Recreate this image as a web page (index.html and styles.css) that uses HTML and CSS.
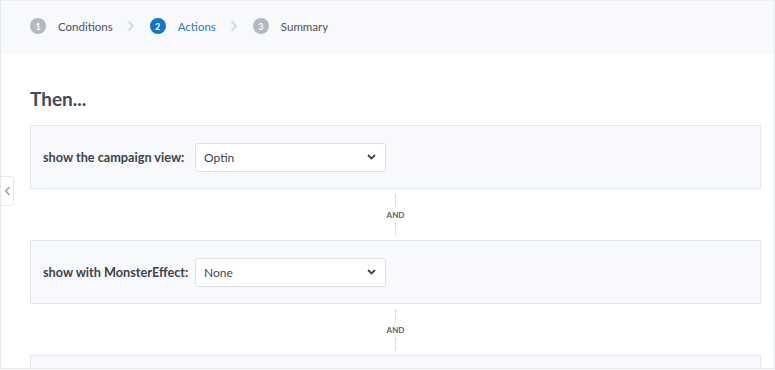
FILE: index.html
```html
<!DOCTYPE html>
<html lang="en">
<head>
  <meta charset="UTF-8">
  <title>Campaign Rules - Actions</title>
  <link rel="stylesheet" href="styles.css">
</head>
<body>
  <div class="frame">
    <div class="steps">
      <div class="step">
        <span class="num">1</span>
        <span class="name">Conditions</span>
      </div>
      <span class="sep">
        <svg width="8" height="12" viewBox="0 0 8 12"><path d="M1.5 1.5l4.5 4.5-4.5 4.5" fill="none" stroke="#d5d9e0" stroke-width="2"/></svg>
      </span>
      <div class="step current">
        <span class="num">2</span>
        <span class="name">Actions</span>
      </div>
      <span class="sep">
        <svg width="8" height="12" viewBox="0 0 8 12"><path d="M1.5 1.5l4.5 4.5-4.5 4.5" fill="none" stroke="#d5d9e0" stroke-width="2"/></svg>
      </span>
      <div class="step">
        <span class="num">3</span>
        <span class="name">Summary</span>
      </div>
    </div>

    <div class="content">
      <button class="side-tab">
        <svg width="7" height="10" viewBox="0 0 7 10"><path d="M5.5 1L1.8 5l3.7 4" fill="none" stroke="#9aa3b2" stroke-width="1.6"/></svg>
      </button>

      <h2 class="title">Then...</h2>

      <div class="rule">
        <label class="rule-label">show the campaign view:</label>
        <div class="select">
          <span>Optin</span>
          <svg width="9" height="6" viewBox="0 0 9 6"><path d="M1 1l3.5 3.5L8 1" fill="none" stroke="#3d434d" stroke-width="1.8"/></svg>
        </div>
      </div>

      <div class="joiner"><span class="dots"></span><span class="and">AND</span><span class="dots"></span></div>

      <div class="rule">
        <label class="rule-label">show with MonsterEffect:</label>
        <div class="select">
          <span>None</span>
          <svg width="9" height="6" viewBox="0 0 9 6"><path d="M1 1l3.5 3.5L8 1" fill="none" stroke="#3d434d" stroke-width="1.8"/></svg>
        </div>
      </div>

      <div class="joiner"><span class="dots"></span><span class="and">AND</span><span class="dots"></span></div>

      <div class="rule"></div>
    </div>
  </div>
</body>
</html>
```

FILE: styles.css
```css
body {
  font-family: Lato, "Liberation Sans", Arial, sans-serif;
  background-color: #fff;
  margin: 0;
  padding: 0;
  color: #3d434d;
}
.frame {
  height: 369px;
  border: 1px solid #e4e7ec;
  border-top: none;
  overflow: hidden;
  box-sizing: border-box;
}
.steps {
  display: flex;
  align-items: center;
  height: 54px;
  padding: 0 0 3px 29px;
  background-color: #f8f9fd;
  border-top: 1px solid #eceef2;
  box-sizing: border-box;
}
.step {
  display: flex;
  align-items: center;
  gap: 12px;
  font-size: 11.5px;
  color: #4b515c;
}
.num {
  width: 16px;
  height: 16px;
  border-radius: 50%;
  background-color: #b2b8c4;
  color: #fff;
  font-size: 9px;
  font-weight: bold;
  display: flex;
  align-items: center;
  justify-content: center;
}
.step.current .num {
  background-color: #1475c8;
}
.step.current .name {
  color: #2b7bc6;
}
.sep {
  display: flex;
  margin: 0 15px 0 14px;
}
.content {
  position: relative;
  padding: 35px 13px 0 29px;
}
.side-tab {
  position: absolute;
  left: -1px;
  top: 122px;
  width: 14px;
  height: 30px;
  padding: 0;
  border: 1px solid #e4e7ec;
  border-radius: 0 3px 3px 0;
  background-color: #fff;
  display: flex;
  align-items: center;
  justify-content: center;
}
.title {
  margin: 0 0 17px 0;
  font-size: 19px;
  font-weight: bold;
  color: #454b56;
  line-height: 1;
}
.rule {
  height: 64px;
  display: flex;
  align-items: center;
  padding: 0 12px;
  background-color: #f8f9fd;
  border: 1px solid #e2e6ee;
  box-sizing: border-box;
}
.rule-label {
  width: 152px;
  flex-shrink: 0;
  font-size: 12.7px;
  font-weight: bold;
  color: #3d434d;
}
.select {
  width: 191px;
  height: 29px;
  display: flex;
  align-items: center;
  justify-content: space-between;
  padding: 0 9px 0 8px;
  background-color: #fff;
  border: 1px solid #dde1e8;
  border-radius: 3px;
  box-sizing: border-box;
  font-size: 12px;
  color: #3d434d;
}
.joiner {
  height: 51px;
  display: flex;
  flex-direction: column;
  align-items: center;
  justify-content: center;
  gap: 3px;
}
.dots {
  height: 12px;
  border-left: 1px dotted #bfc5ce;
}
.and {
  font-size: 8px;
  font-weight: bold;
  color: #5b616b;
}
```
